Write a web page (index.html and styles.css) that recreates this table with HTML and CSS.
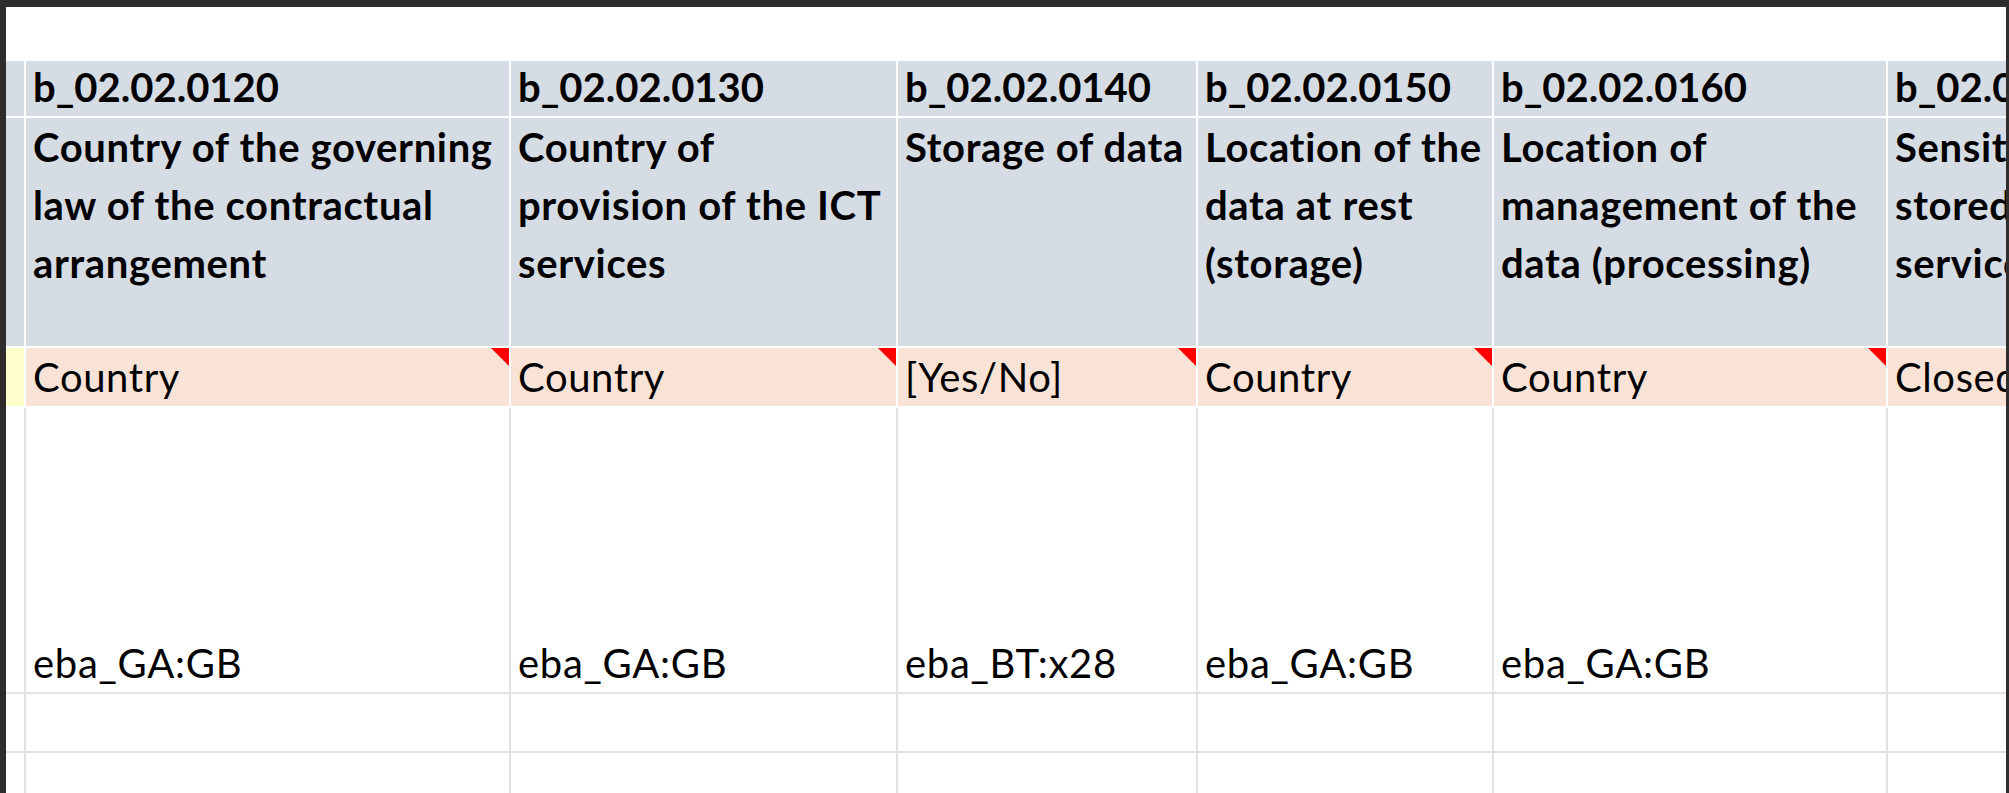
FILE: index.html
```html
<!DOCTYPE html>
<html lang="en">
<head>
<meta charset="utf-8">
<title>b_02.02 sheet</title>
<link rel="stylesheet" href="styles.css">
</head>
<body>
<div class="sheet">
  <div class="top-band"></div>
  <div class="grid">
    <div class="cell rowhead hdr"></div>
    <div class="cell hdr bold">b_02.02.0120</div>
    <div class="cell hdr bold">b_02.02.0130</div>
    <div class="cell hdr bold">b_02.02.0140</div>
    <div class="cell hdr bold">b_02.02.0150</div>
    <div class="cell hdr bold">b_02.02.0160</div>
    <div class="cell hdr bold">b_02.02.0170</div>

    <div class="cell rowhead hdr"></div>
    <div class="cell hdr bold top">Country of the governing<br>law of the contractual<br>arrangement</div>
    <div class="cell hdr bold top">Country of<br>provision of the ICT<br>services</div>
    <div class="cell hdr bold top">Storage of data</div>
    <div class="cell hdr bold top">Location of the<br>data at rest<br>(storage)</div>
    <div class="cell hdr bold top">Location of<br>management of the<br>data (processing)</div>
    <div class="cell hdr bold top">Sensitiveness of the data<br>stored by the ICT third-party<br>service provider</div>

    <div class="cell rowhead note"></div>
    <div class="cell type flag">Country</div>
    <div class="cell type flag">Country</div>
    <div class="cell type flag">[Yes/No]</div>
    <div class="cell type flag">Country</div>
    <div class="cell type flag">Country</div>
    <div class="cell type">Closed set of options</div>

    <div class="cell rowhead data"></div>
    <div class="cell data">eba_GA:GB</div>
    <div class="cell data">eba_GA:GB</div>
    <div class="cell data">eba_BT:x28</div>
    <div class="cell data">eba_GA:GB</div>
    <div class="cell data">eba_GA:GB</div>
    <div class="cell data"></div>

    <div class="cell rowhead data"></div>
    <div class="cell data"></div>
    <div class="cell data"></div>
    <div class="cell data"></div>
    <div class="cell data"></div>
    <div class="cell data"></div>
    <div class="cell data"></div>

    <div class="cell rowhead data"></div>
    <div class="cell data"></div>
    <div class="cell data"></div>
    <div class="cell data"></div>
    <div class="cell data"></div>
    <div class="cell data"></div>
    <div class="cell data"></div>
  </div>
</div>
</body>
</html>
```

FILE: styles.css
```css
html, body {
  margin: 0;
  height: 100%;
}

body {
  background: #2f2d2c;
  font-family: Lato, "Liberation Sans", sans-serif;
  color: #000;
  overflow: hidden;
}

.sheet {
  margin: 7px 3px 0 6px;
  height: 786px;
  background: #fff;
  overflow: hidden;
}

.top-band {
  height: 54px;
}

.grid {
  display: grid;
  grid-template-columns: 20px 485px 387px 300px 296px 394px 420px;
  grid-template-rows: 57px 230px 60px 286px 59px 59px;
}

.cell {
  box-sizing: border-box;
  position: relative;
  display: flex;
  align-items: flex-end;
  padding-left: 7px;
  border-right: 2px solid #fff;
  border-bottom: 2px solid #fff;
  font-size: 40px;
  line-height: 58px;
  white-space: nowrap;
  overflow: hidden;
}

.rowhead {
  padding-left: 0;
}

.hdr {
  background: #d6dce4;
}

.bold {
  font-weight: 700;
}

.top {
  display: block;
  letter-spacing: 0.65px;
}

.type {
  background: #f9e3d6;
  letter-spacing: 0.6px;
}

.note {
  background: #ffffcc;
}

.data {
  background: #fff;
  border-right-color: #e2e2e2;
  border-bottom-color: #e2e2e2;
  letter-spacing: 0.7px;
}

.flag::after {
  content: "";
  position: absolute;
  top: 0;
  right: 0;
  width: 0;
  height: 0;
  border-top: 18px solid #ff0000;
  border-left: 18px solid transparent;
}
```
